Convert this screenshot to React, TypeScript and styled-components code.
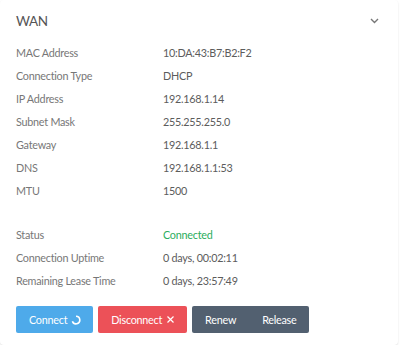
import React from 'react'
import styled, { createGlobalStyle } from 'styled-components'

const Global = createGlobalStyle`
  body {
    margin: 0;
    background: #fff;
    font-family: Lato, 'Open Sans', sans-serif;
  }
`

const Card = styled.section`
  width: 398px;
  height: 345px;
  box-sizing: border-box;
  background: #fff;
  border-radius: 4px;
  box-shadow: 0 1px 2px rgba(0, 0, 0, 0.12);
  padding: 0 16px;
`

const Head = styled.header`
  display: flex;
  align-items: center;
  justify-content: space-between;
  height: 41px;
  color: #555;
  font-size: 13.5px;
  letter-spacing: -0.4px;
  padding-right: 3px;
`

const List = styled.div`
  display: flex;
  flex-direction: column;
`

const Row = styled.div`
  display: grid;
  grid-template-columns: 147px 1fr;
  height: 23px;
  align-items: center;
  font-size: 10.8px;
  letter-spacing: -0.25px;
  color: #777;
`

const Value = styled.span<{ $ok?: boolean }>`
  color: ${({ $ok }) => ($ok ? '#2aad5c' : '#5c5c5c')};
`

const Spacer = styled.div`
  height: 21px;
`

const Actions = styled.div`
  display: flex;
  gap: 5px;
  margin-top: 14px;
`

const Btn = styled.button<{ $bg: string }>`
  display: flex;
  align-items: center;
  gap: 4px;
  height: 27px;
  padding: 0 12px 0 13px;
  border: none;
  border-radius: 2px;
  background: ${({ $bg }) => $bg};
  color: #fff;
  font-family: inherit;
  font-size: 10.8px;
  letter-spacing: -0.25px;
`

const Group = styled.div`
  display: flex;
  border-radius: 2px;
  overflow: hidden;
  ${Btn} {
    border-radius: 0;
    padding: 0 13px;
  }
`

const rows: [string, string][] = [
  ['MAC Address', '10:DA:43:B7:B2:F2'],
  ['Connection Type', 'DHCP'],
  ['IP Address', '192.168.1.14'],
  ['Subnet Mask', '255.255.255.0'],
  ['Gateway', '192.168.1.1'],
  ['DNS', '192.168.1.1:53'],
  ['MTU', '1500'],
]

const status: [string, string][] = [
  ['Status', 'Connected'],
  ['Connection Uptime', '0 days, 00:02:11'],
  ['Remaining Lease Time', '0 days, 23:57:49'],
]

const App = (): JSX.Element => {
  return (
    <>
      <Global />
      <Card>
        <Head>
          <span>WAN</span>
          <svg width="9" height="6" viewBox="0 0 9 6">
            <path d="M1 1l3.5 3.5L8 1" fill="none" stroke="#777" strokeWidth="1.4" />
          </svg>
        </Head>
        <List>
          {rows.map(([k, v]) => (
            <Row key={k}>
              <span>{k}</span>
              <Value>{v}</Value>
            </Row>
          ))}
          <Spacer />
          {status.map(([k, v]) => (
            <Row key={k}>
              <span>{k}</span>
              <Value $ok={k === 'Status'}>{v}</Value>
            </Row>
          ))}
        </List>
        <Actions>
          <Btn $bg="#4eaaea">
            Connect
            <svg width="10" height="10" viewBox="0 0 10 10">
              <path
                d="M5 1.2A3.8 3.8 0 1 1 1.4 6.2"
                fill="none"
                stroke="#fff"
                strokeWidth="1.6"
              />
            </svg>
          </Btn>
          <Btn $bg="#ec5158">
            Disconnect
            <svg width="9" height="9" viewBox="0 0 9 9">
              <path d="M1.5 1.5l6 6M7.5 1.5l-6 6" stroke="#fff" strokeWidth="1.2" />
            </svg>
          </Btn>
          <Group>
            <Btn $bg="#526070">Renew</Btn>
            <Btn $bg="#526070">Release</Btn>
          </Group>
        </Actions>
      </Card>
    </>
  )
}

export default App
